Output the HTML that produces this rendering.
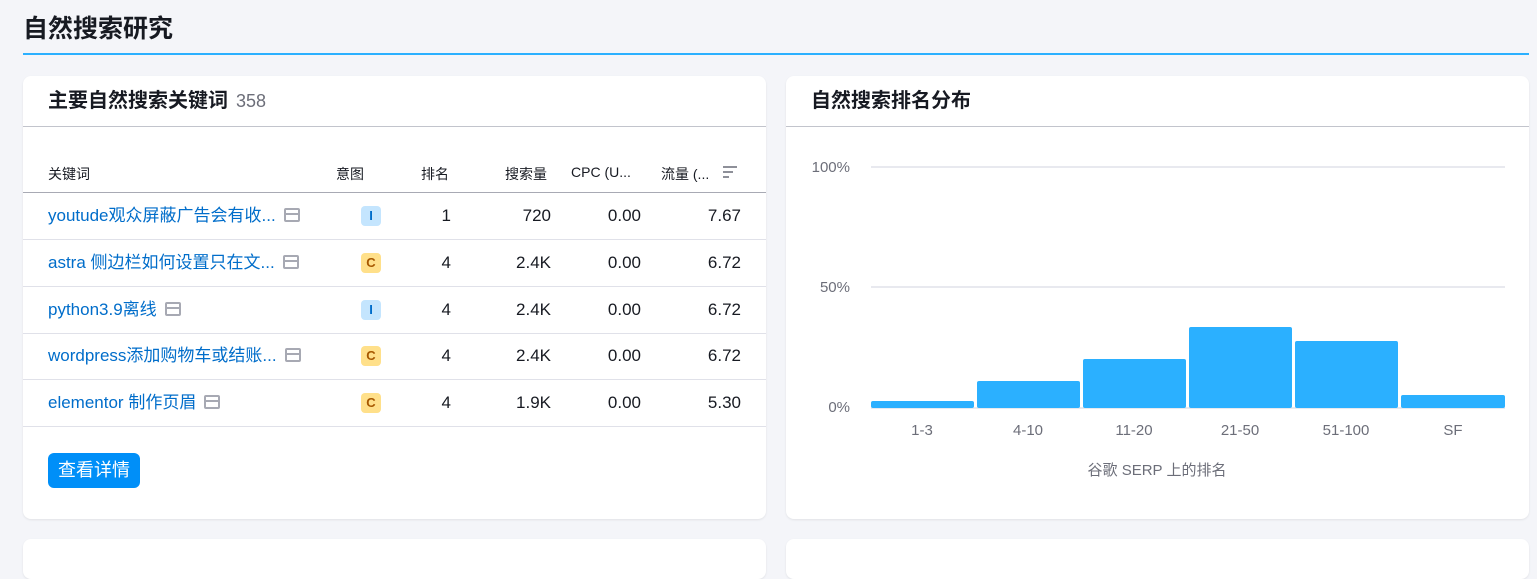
<!DOCTYPE html>
<html><head><meta charset="utf-8"><style>
*{box-sizing:border-box;margin:0;padding:0}
body{width:1537px;height:546px;overflow:hidden;background:#f4f5f9;font-family:"Liberation Sans","Noto Sans CJK SC",sans-serif;color:#171a22;position:relative}
.title{position:absolute;left:23px;top:9px;font-size:25px;font-weight:bold}
.hr{position:absolute;left:23px;top:53px;width:1506px;height:2px;background:#2bb0ff}
.card{position:absolute;background:#fff;border-radius:8px;box-shadow:0 1px 2px rgba(0,0,0,.08)}
.ch{height:51px;border-bottom:1px solid #c2c4cc;padding:0 25px;line-height:50px;font-size:20px;font-weight:bold}
.ch span{font-weight:normal;color:#6c6e79;margin-left:8px;font-size:18px}
.th{position:absolute;font-size:14px}
.row{position:absolute;left:0;width:743px;height:47px;border-bottom:1px solid #e0e1e9}
.c{position:absolute;font-size:17px;top:0;line-height:46px;white-space:nowrap}
.kw{left:25px;color:#006dca}
.ico{display:inline-block;width:16px;height:14px;border:2px solid #a7a9b3;border-radius:2px;vertical-align:-1px;position:relative;margin-left:8px}
.ico:before{content:"";position:absolute;left:0;right:0;top:3px;height:2px;background:#a7a9b3}
.b{position:absolute;left:338px;top:13px;width:20px;height:20px;border-radius:4px;font-size:13px;font-weight:bold;text-align:center;line-height:20px}
.bi{background:#c4e5fe;color:#006dca}.bc{background:#ffe08a;color:#a75800}
.r{text-align:right}
</style></head><body>
<div class="title">自然搜索研究</div>
<div class="hr"></div>

<div class="card" style="left:23px;top:76px;width:743px;height:443px">
<div class="ch">主要自然搜索关键词<span>358</span></div>
<div class="th" style="left:25px;top:88px">关键词</div>
<div class="th" style="left:313px;top:88px">意图</div>
<div class="th" style="left:398px;top:88px">排名</div>
<div class="th" style="left:482px;top:88px">搜索量</div>
<div class="th" style="left:548px;top:88px">CPC (U...</div>
<div class="th" style="left:638px;top:88px">流量 (...</div>
<div style="position:absolute;left:700px;top:90px;width:14px">
<div style="height:2px;background:#8e9099;width:14px;margin-bottom:3px"></div>
<div style="height:2px;background:#8e9099;width:10px;margin-bottom:3px"></div>
<div style="height:2px;background:#8e9099;width:6px"></div></div>
<div style="position:absolute;left:0;top:116px;width:743px;height:1px;background:#a8aab4"></div>

<div class="row" style="top:117px"><div class="c kw">youtude观众屏蔽广告会有收...<i class="ico"></i></div><div class="b bi">I</div><div class="c r" style="right:315px">1</div><div class="c r" style="right:215px">720</div><div class="c r" style="right:125px">0.00</div><div class="c r" style="right:25px">7.67</div></div>
<div class="row" style="top:164px"><div class="c kw">astra 侧边栏如何设置只在文...<i class="ico"></i></div><div class="b bc">C</div><div class="c r" style="right:315px">4</div><div class="c r" style="right:215px">2.4K</div><div class="c r" style="right:125px">0.00</div><div class="c r" style="right:25px">6.72</div></div>
<div class="row" style="top:211px"><div class="c kw">python3.9离线<i class="ico"></i></div><div class="b bi">I</div><div class="c r" style="right:315px">4</div><div class="c r" style="right:215px">2.4K</div><div class="c r" style="right:125px">0.00</div><div class="c r" style="right:25px">6.72</div></div>
<div class="row" style="top:257px"><div class="c kw">wordpress添加购物车或结账...<i class="ico"></i></div><div class="b bc">C</div><div class="c r" style="right:315px">4</div><div class="c r" style="right:215px">2.4K</div><div class="c r" style="right:125px">0.00</div><div class="c r" style="right:25px">6.72</div></div>
<div class="row" style="top:304px"><div class="c kw">elementor 制作页眉<i class="ico"></i></div><div class="b bc">C</div><div class="c r" style="right:315px">4</div><div class="c r" style="right:215px">1.9K</div><div class="c r" style="right:125px">0.00</div><div class="c r" style="right:25px">5.30</div></div>

<div style="position:absolute;left:25px;top:377px;width:92px;height:35px;background:#008ff8;color:#fff;border-radius:6px;font-size:18px;text-align:center;line-height:35px">查看详情</div>
</div>

<div class="card" style="left:786px;top:76px;width:743px;height:443px">
<div class="ch">自然搜索排名分布</div>
</div>
<svg style="position:absolute;left:786px;top:140px" width="743" height="350" font-family="Liberation Sans, Noto Sans CJK SC, sans-serif" font-size="15" fill="#6c6e79">
<g transform="translate(-786,-140)">
<line x1="871" x2="1505" y1="167" y2="167" stroke="#e8e9ef" stroke-width="2"/>
<line x1="871" x2="1505" y1="287" y2="287" stroke="#e8e9ef" stroke-width="2"/>
<line x1="871" x2="1505" y1="408" y2="408" stroke="#e8e9ef" stroke-width="2"/>
<text x="850" y="172" text-anchor="end">100%</text>
<text x="850" y="292" text-anchor="end">50%</text>
<text x="850" y="412" text-anchor="end">0%</text>
<g fill="#2bb0ff">
<rect x="871" y="401" width="103" height="7" rx="2"/>
<rect x="977" y="381" width="103" height="27" rx="2"/>
<rect x="1083" y="359" width="103" height="49" rx="2"/>
<rect x="1189" y="327" width="103" height="81" rx="2"/>
<rect x="1295" y="341" width="103" height="67" rx="2"/>
<rect x="1401" y="395" width="104" height="13" rx="2"/>
</g>
<g text-anchor="middle">
<text x="922" y="435">1-3</text><text x="1028" y="435">4-10</text><text x="1134" y="435">11-20</text>
<text x="1240" y="435">21-50</text><text x="1346" y="435">51-100</text><text x="1453" y="435">SF</text>
<text x="1157" y="475">谷歌 SERP 上的排名</text>
</g></g></svg>

<div class="card" style="left:23px;top:539px;width:743px;height:40px"></div>
<div class="card" style="left:786px;top:539px;width:743px;height:40px"></div>
</body></html>
